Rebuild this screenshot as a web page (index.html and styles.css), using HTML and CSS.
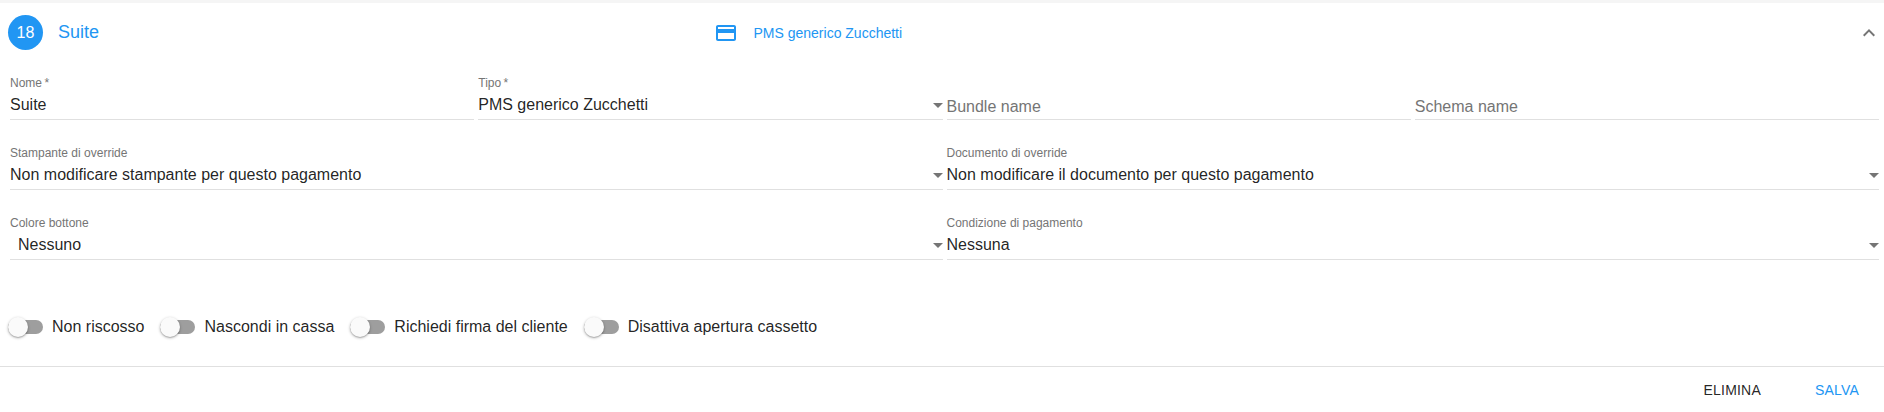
FILE: index.html
```html
<!DOCTYPE html>
<html lang="it">
<head>
<meta charset="utf-8">
<title>Suite</title>
<link rel="stylesheet" href="styles.css">
</head>
<body>
<section class="panel">
  <header class="head">
    <div class="head-left">
      <span class="badge">18</span>
      <span class="title">Suite</span>
    </div>
    <div class="head-mid">
      <svg class="card-icon" viewBox="2 4 20 16" width="20" height="16"><path fill="#2196f3" d="M20 4H4c-1.11 0-1.99.89-1.99 2L2 18c0 1.11.89 2 2 2h16c1.11 0 2-.89 2-2V6c0-1.11-.89-2-2-2zm0 14H4v-6h16v6zm0-10H4V6h16v2z"/></svg>
      <span class="mid-text">PMS generico Zucchetti</span>
    </div>
    <svg class="chevron" viewBox="6 8 12 8" width="12" height="8"><path fill="#757575" d="M12 8l-6 6 1.41 1.41L12 10.83l4.59 4.58L18 14z"/></svg>
  </header>
  <form class="fields">
    <div class="row">
      <div class="field"><label class="lab">Nome&thinsp;*</label><div class="val">Suite</div></div>
      <div class="field"><label class="lab">Tipo&thinsp;*</label><div class="val">PMS generico Zucchetti</div><i class="arrow"></i></div>
      <div class="field"><div class="val ph">Bundle name</div></div>
      <div class="field"><div class="val ph">Schema name</div></div>
    </div>
    <div class="row">
      <div class="field wide"><label class="lab">Stampante di override</label><div class="val">Non modificare stampante per questo pagamento</div><i class="arrow"></i></div>
      <div class="field wide"><label class="lab">Documento di override</label><div class="val">Non modificare il documento per questo pagamento</div><i class="arrow"></i></div>
    </div>
    <div class="row">
      <div class="field wide"><label class="lab">Colore bottone</label><div class="val indent">Nessuno</div><i class="arrow"></i></div>
      <div class="field wide"><label class="lab">Condizione di pagamento</label><div class="val">Nessuna</div><i class="arrow"></i></div>
    </div>
  </form>
  <div class="toggles">
    <div class="toggle"><span class="switch"><span class="thumb"></span></span><span>Non riscosso</span></div>
    <div class="toggle"><span class="switch"><span class="thumb"></span></span><span>Nascondi in cassa</span></div>
    <div class="toggle"><span class="switch"><span class="thumb"></span></span><span>Richiedi firma del cliente</span></div>
    <div class="toggle"><span class="switch"><span class="thumb"></span></span><span>Disattiva apertura cassetto</span></div>
  </div>
  <footer class="actions">
    <span class="btn">ELIMINA</span>
    <span class="btn primary">SALVA</span>
  </footer>
</section>
</body>
</html>
```
FILE: styles.css
```css
* { box-sizing: border-box; }
html, body { margin: 0; padding: 0; background: #fff; }
body { font-family: "Liberation Sans", Roboto, sans-serif; color: rgba(0,0,0,.87); height: 412px; overflow: hidden; }
.panel { border-top: 3px solid #f5f5f5; }
.head { position: relative; display: flex; align-items: center; height: 59px; padding: 0 8px; }
.head-left { display: flex; align-items: center; width: 700px; }
.badge { width: 35px; height: 35px; border-radius: 50%; background: #2196f3; color: #fff; font-size: 16px; display: flex; align-items: center; justify-content: center; }
.title { margin-left: 15px; color: #2196f3; font-size: 18px; }
.head-mid { position: absolute; left: 716px; top: 22px; display: flex; align-items: center; }
.card-icon { display: block; }
.mid-text { margin-left: 17.5px; color: #2196f3; font-size: 14px; }
.chevron { position: absolute; right: 9px; top: 26px; }
.fields { padding: 0 3px 0 8px; }
.row { display: flex; height: 70px; }
.field { position: relative; flex: 1 1 25%; min-width: 0; margin: 0 2px; height: 58px; border-bottom: 1px solid #e0e0e0; padding-top: 14px; }
.field.wide { flex-basis: 50%; }
.lab { display: block; font-size: 12px; line-height: 14px; color: #757575; }
.val { font-size: 16px; line-height: 19px; height: 19px; margin-top: 5px; white-space: nowrap; }
.val.ph { color: #757575; margin-top: 21px; }
.indent { padding-left: 8px; }
.arrow { position: absolute; right: 0; bottom: 11px; width: 0; height: 0; border-left: 5px solid transparent; border-right: 5px solid transparent; border-top: 5px solid #757575; }
.toggles { display: flex; align-items: center; margin-top: 38px; padding-left: 8px; height: 34px; }
.toggle { display: flex; align-items: center; font-size: 16px; margin-right: 16px; }
.switch { position: relative; display: block; width: 35px; height: 14px; border-radius: 7px; background: #9e9e9e; margin-right: 9px; }
.thumb { position: absolute; left: 0; top: -3px; width: 20px; height: 20px; border-radius: 50%; background: #fafafa; box-shadow: 0 1px 3px rgba(0,0,0,.3), 0 1px 1px rgba(0,0,0,.14); }
.actions { display: flex; justify-content: flex-end; align-items: flex-start; margin-top: 22px; border-top: 1px solid #e0e0e0; height: 46px; padding: 15px 25px 0 0; gap: 54px; }
.btn { font-size: 14px; letter-spacing: .2px; }
.btn.primary { color: #2196f3; }
```
